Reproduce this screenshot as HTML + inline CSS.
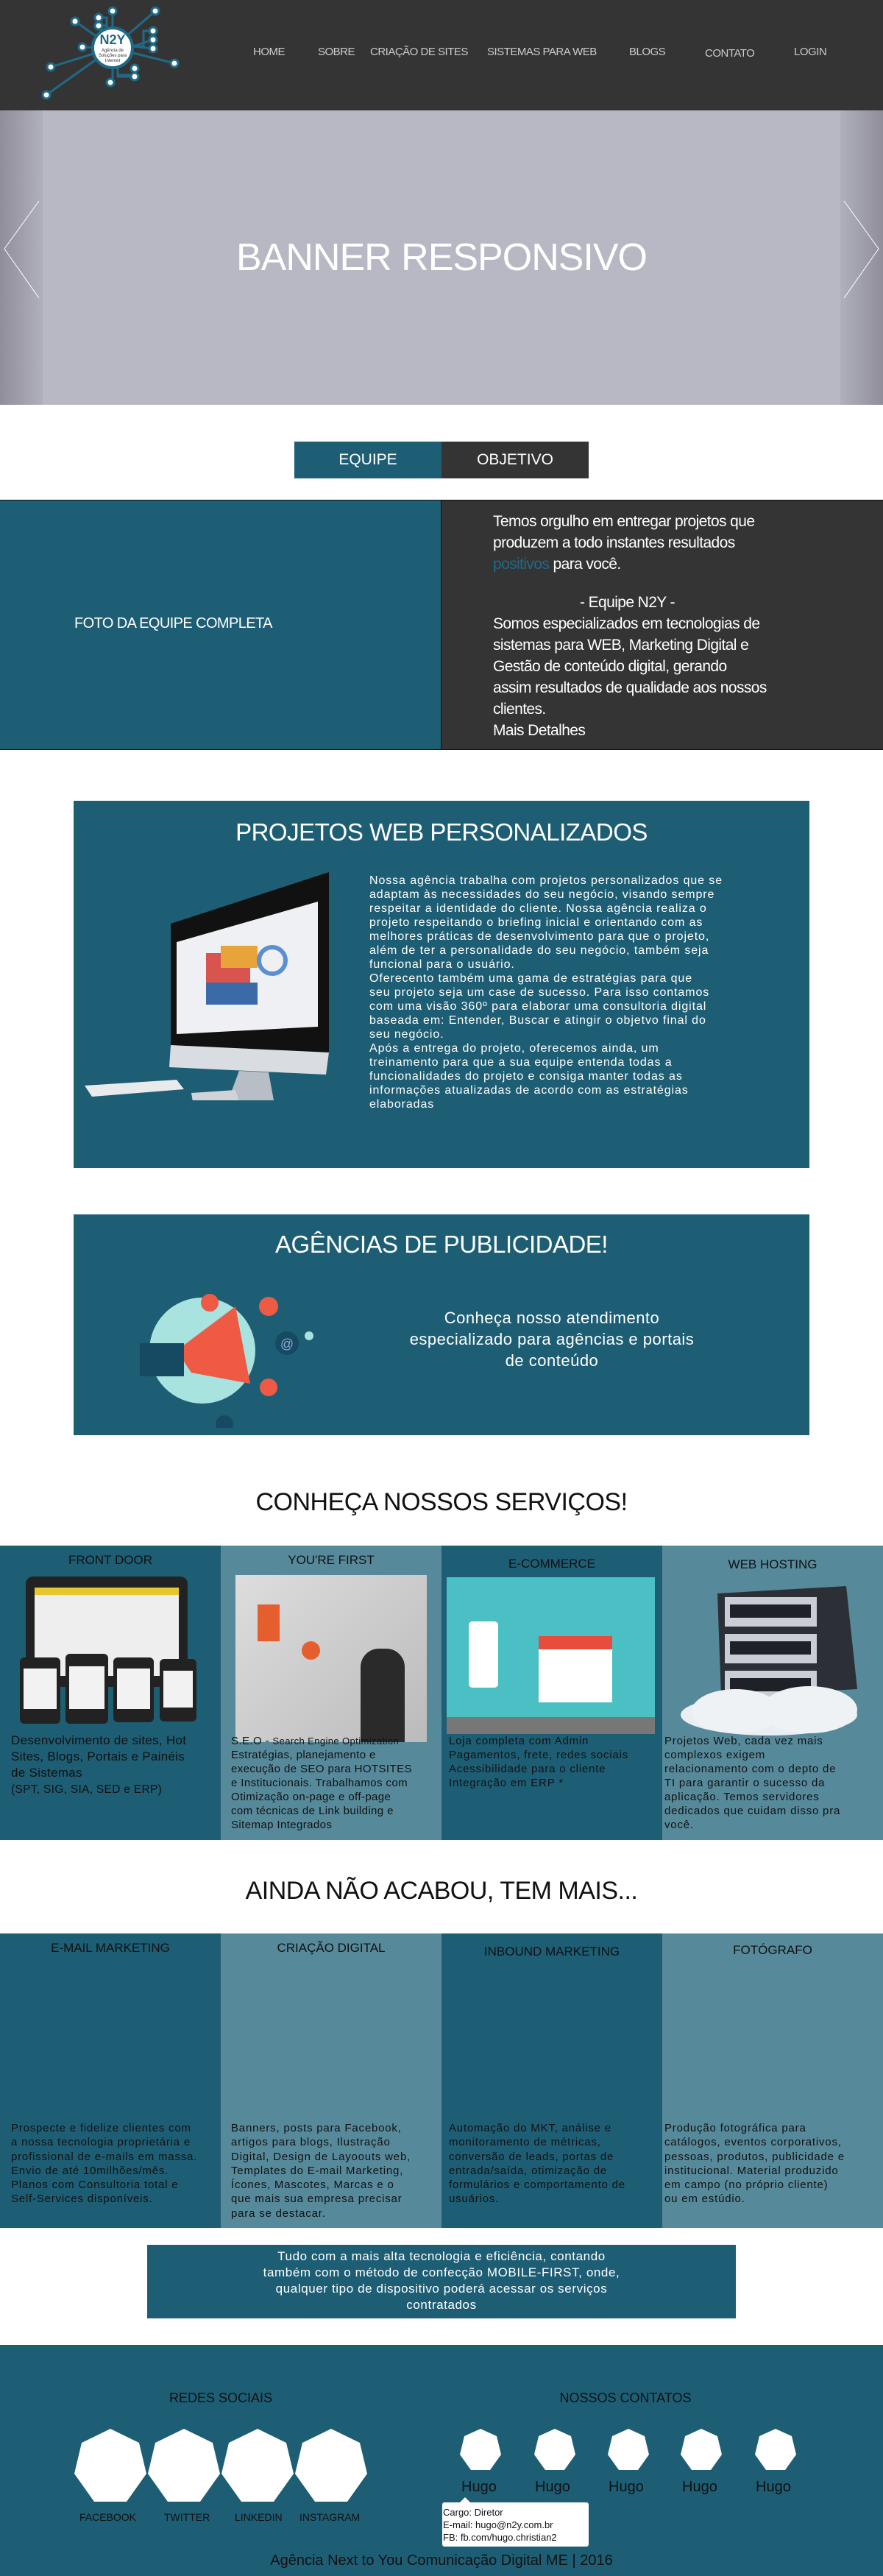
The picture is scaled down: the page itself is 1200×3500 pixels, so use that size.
<!DOCTYPE html>
<html><head><meta charset="utf-8"><style>
*{margin:0;padding:0;box-sizing:border-box}
body{width:1200px;height:3500px;position:relative;background:#fff;font-family:"Liberation Sans",sans-serif;overflow:hidden}
.a{position:absolute}
.nav{color:#ccc;font-size:15px;top:62px;letter-spacing:-0.5px}
.t{color:#fff}
.c{text-align:center}
.col{position:absolute;top:0;height:100%;width:300px}
.dk{background:#1d5e75}.lt{background:#56899a}
.ct{position:absolute;width:300px;text-align:center;font-size:17px;color:#111}
.cx{position:absolute;font-size:15px;line-height:19px;color:#111;white-space:nowrap;letter-spacing:0.8px}
</style></head><body>
<!-- header -->
<div class="a" style="left:0;top:0;width:1200px;height:150px;background:#353435"></div>
<svg class="a" style="left:40px;top:0" width="220" height="150" viewBox="0 0 220 150">
<g stroke="#1f6a86" stroke-width="3" fill="none">
<line x1="113" y1="65" x2="171" y2="15"/><line x1="113" y1="65" x2="62" y2="29"/><line x1="113" y1="65" x2="29" y2="91"/><line x1="113" y1="65" x2="23" y2="129"/><line x1="113" y1="65" x2="197" y2="86"/><line x1="113" y1="65" x2="72" y2="64"/>
<polyline points="113,40 113,15"/><polyline points="105,40 105,24 94,24"/><polyline points="105,40 105,35 94,35"/><polyline points="140,63 155,63 155,42 168,42"/><polyline points="140,63 168,54"/><polyline points="140,63 168,66"/><polyline points="113,90 113,112"/><polyline points="120,92 120,102 143,102 143,93"/><polyline points="120,92 120,104 143,104"/>
</g>
<g fill="#fff" stroke="#1f6a86" stroke-width="3">
<circle cx="171" cy="15" r="5"/><circle cx="62" cy="29" r="5"/><circle cx="29" cy="91" r="5"/><circle cx="23" cy="129" r="5"/><circle cx="197" cy="86" r="5"/><circle cx="72" cy="64" r="5"/><circle cx="113" cy="15" r="5"/><circle cx="94" cy="24" r="5"/><circle cx="94" cy="35" r="5"/><circle cx="168" cy="42" r="5"/><circle cx="168" cy="54" r="5"/><circle cx="168" cy="66" r="5"/><circle cx="110" cy="112" r="5"/><circle cx="143" cy="93" r="5"/><circle cx="143" cy="104" r="5"/>
<circle cx="113" cy="65" r="27" stroke-width="4"/></g>
<text x="113" y="60" text-anchor="middle" font-family="Liberation Sans" font-weight="bold" font-size="18" fill="#1f6a86">N2Y</text>
<text x="113" y="70" text-anchor="middle" font-family="Liberation Sans" font-size="6" fill="#333">Agência de</text>
<text x="113" y="77" text-anchor="middle" font-family="Liberation Sans" font-size="6" fill="#333">Soluções para</text>
<text x="113" y="84" text-anchor="middle" font-family="Liberation Sans" font-size="6" fill="#333">Internet</text>
</svg>
<div class="a nav" style="left:344px">HOME</div>
<div class="a nav" style="left:432px">SOBRE</div>
<div class="a nav" style="left:503px">CRIAÇÃO DE SITES</div>
<div class="a nav" style="left:662px">SISTEMAS PARA WEB</div>
<div class="a nav" style="left:855px">BLOGS</div>
<div class="a nav" style="left:958px;top:64px">CONTATO</div>
<div class="a nav" style="left:1079px">LOGIN</div>
<!-- banner -->
<div class="a" style="left:0;top:150px;width:1200px;height:400px;background:linear-gradient(90deg,#8f8e9a 0,#b0b0bc 58px,#b8b8c5 58px,#b8b8c5 1142px,#b0b0bc 1142px,#8f8e9a 1200px)"></div>
<svg class="a" style="left:0;top:270px" width="1200" height="140"><polyline points="53,3 6,68 53,135" fill="none" stroke="#fff" stroke-width="1"/><polyline points="1147,3 1194,68 1147,135" fill="none" stroke="#fff" stroke-width="1"/></svg>
<div class="a t c" style="left:0;width:1200px;top:320px;font-size:52px;letter-spacing:-1px">BANNER RESPONSIVO</div>
<!-- tabs -->
<div class="a t c" style="left:400px;top:600px;width:200px;height:50px;background:#1d5e75;font-size:21px;line-height:50px">EQUIPE</div>
<div class="a t c" style="left:600px;top:600px;width:200px;height:50px;background:#353435;font-size:21px;line-height:50px">OBJETIVO</div>
<!-- team -->
<div class="a" style="left:0;top:679px;width:600px;height:340px;background:#1d5e75;border-top:1px solid #111;border-bottom:1px solid #111"></div>
<div class="a" style="left:599px;top:679px;width:601px;height:340px;background:#353435;border-top:1px solid #111;border-bottom:1px solid #111;border-left:1px solid #111"></div>
<div class="a t" style="left:101px;top:836px;font-size:20px;letter-spacing:-0.6px">FOTO DA EQUIPE COMPLETA</div>
<div class="a t" style="left:670px;top:694px;font-size:21px;line-height:29px;letter-spacing:-0.6px;white-space:nowrap">Temos orgulho em entregar projetos que<br>produzem a todo instantes resultados<br><span style="color:#1f6a86">positivos</span> para você.<div style="height:23px"></div><div style="padding-left:118px">- Equipe N2Y -</div>Somos especializados em tecnologias de<br>sistemas para WEB, Marketing Digital e<br>Gestão de conteúdo digital, gerando<br>assim resultados de qualidade aos nossos<br>clientes.<br>Mais Detalhes</div>
<!-- projetos -->
<div class="a" style="left:100px;top:1088px;width:1000px;height:499px;background:#1d5e75"></div>
<div class="a t c" style="left:100px;top:1112px;width:1000px;font-size:33px;letter-spacing:-0.5px">PROJETOS WEB PERSONALIZADOS</div>
<svg class="a" style="left:110px;top:1185px" width="340" height="310">
<polygon points="122,70 337,0 337,245 122,235" fill="#111"/>
<polygon points="130,95 322,40 322,210 130,220" fill="#eef0f3"/>
<rect x="170" y="110" width="60" height="40" fill="#d9534f"/><rect x="190" y="100" width="50" height="30" fill="#e8a33b"/><rect x="170" y="150" width="70" height="30" fill="#3b6aa8"/><circle cx="260" cy="120" r="18" fill="none" stroke="#5b8fd0" stroke-width="6"/>
<polygon points="122,235 337,245 333,275 120,265" fill="#d9dde2"/>
<polygon points="215,270 255,272 262,310 200,310" fill="#b8bec6"/>
<polygon points="5,290 130,282 140,295 15,305" fill="#e8eaec"/>
<polygon points="150,300 210,296 215,312 152,312" fill="#d0d4d8"/>
</svg>
<div class="a t" style="left:502px;top:1187px;font-size:16px;line-height:19px;white-space:nowrap;letter-spacing:0.9px">Nossa agência trabalha com projetos personalizados que se<br>adaptam às necessidades do seu negócio, visando sempre<br>respeitar a identidade do cliente. Nossa agência realiza o<br>projeto respeitando o briefing inicial e orientando com as<br>melhores práticas de desenvolvimento para que o projeto,<br>além de ter a personalidade do seu negócio, também seja<br>funcional para o usuário.<br>Oferecento também uma gama de estratégias para que<br>seu projeto seja um case de sucesso. Para isso contamos<br>com uma visão 360º para elaborar uma consultoria digital<br>baseada em: Entender, Buscar e atingir o objetvo final do<br>seu negócio.<br>Após a entrega do projeto, oferecemos ainda, um<br>treinamento para que a sua equipe entenda todas a<br>funcionalidades do projeto e consiga manter todas as<br>informações atualizadas de acordo com as estratégias<br>elaboradas</div>
<!-- agencias -->
<div class="a" style="left:100px;top:1650px;width:1000px;height:300px;background:#1d5e75"></div>
<div class="a t c" style="left:100px;top:1672px;width:1000px;font-size:33px;letter-spacing:-0.5px">AGÊNCIAS DE PUBLICIDADE!</div>
<svg class="a" style="left:180px;top:1735px" width="260" height="205">
<circle cx="95" cy="100" r="72" fill="#a8e3e0"/>
<polygon points="60,100 140,40 160,145 80,130" fill="#ef5a45"/>
<rect x="10" y="90" width="60" height="45" fill="#164a62"/>
<circle cx="210" cy="90" r="16" fill="#164a62"/><text x="210" y="97" text-anchor="middle" fill="#8ad" font-size="18">@</text>
<circle cx="185" cy="40" r="13" fill="#ef5a45"/><circle cx="105" cy="35" r="12" fill="#ef5a45"/><circle cx="185" cy="150" r="12" fill="#ef5a45"/><circle cx="125" cy="200" r="12" fill="#164a62"/><circle cx="240" cy="80" r="6" fill="#a8e3e0"/>
</svg>
<div class="a t c" style="left:480px;top:1776px;width:540px;font-size:22px;line-height:29px;white-space:nowrap;letter-spacing:0.5px">Conheça nosso atendimento<br>especializado para agências e portais<br>de conteúdo</div>
<!-- servicos -->
<div class="a c" style="left:0;top:2022px;width:1200px;font-size:34px;color:#111;letter-spacing:-0.5px">CONHEÇA NOSSOS SERVIÇOS!</div>
<div class="a" style="left:0;top:2100px;width:1200px;height:400px">
<div class="col dk" style="left:0"></div><div class="col lt" style="left:300px"></div><div class="col dk" style="left:600px"></div><div class="col lt" style="left:900px"></div>
<div class="ct" style="left:0;top:10px">FRONT DOOR</div><div class="ct" style="left:300px;top:10px">YOU'RE FIRST</div><div class="ct" style="left:600px;top:15px">E-COMMERCE</div><div class="ct" style="left:900px;top:16px">WEB HOSTING</div>
<svg class="a" style="left:27px;top:42px" width="245" height="200"><rect x="8" y="0" width="220" height="150" rx="10" fill="#222"/><rect x="20" y="15" width="196" height="120" fill="#eee"/><rect x="20" y="15" width="196" height="10" fill="#e6c730"/><g fill="#222"><rect x="0" y="110" width="55" height="90" rx="6"/><rect x="62" y="105" width="58" height="95" rx="6"/><rect x="127" y="110" width="55" height="88" rx="6"/><rect x="190" y="112" width="50" height="85" rx="6"/></g><g fill="#f2f2f2"><rect x="5" y="125" width="45" height="55"/><rect x="67" y="122" width="48" height="58"/><rect x="132" y="125" width="45" height="55"/><rect x="195" y="128" width="40" height="50"/></g></svg>
<div class="a" style="left:320px;top:40px;width:260px;height:227px;background:linear-gradient(135deg,#ddd,#bbb)"><div class="a" style="left:170px;top:100px;width:60px;height:127px;background:#2a2a2a;border-radius:25px 25px 0 0"></div><div class="a" style="left:30px;top:40px;width:30px;height:50px;background:#e55e2e"></div><div class="a" style="left:90px;top:90px;width:25px;height:25px;border-radius:50%;background:#e55e2e"></div></div>
<div class="a" style="left:607px;top:43px;width:283px;height:213px;background:#4bc0c4"><div class="a" style="left:125px;top:90px;width:100px;height:80px;background:#fff"></div><div class="a" style="left:125px;top:80px;width:100px;height:18px;background:#e84c3d"></div><div class="a" style="left:30px;top:60px;width:40px;height:90px;background:#fff;border-radius:5px"></div><div class="a" style="left:0;top:190px;width:283px;height:23px;background:#777"></div></div>
<svg class="a" style="left:920px;top:45px" width="250" height="215"><ellipse cx="125" cy="185" rx="120" ry="28" fill="#e8eef2"/><polygon points="55,20 230,10 245,150 60,160" fill="#2c3036"/><g fill="#c9ced4"><rect x="65" y="25" width="125" height="40"/><rect x="65" y="75" width="125" height="40"/><rect x="65" y="125" width="125" height="35"/></g><g fill="#1e2228"><rect x="72" y="35" width="110" height="18"/><rect x="72" y="85" width="110" height="18"/><rect x="72" y="135" width="110" height="18"/></g><ellipse cx="80" cy="180" rx="60" ry="30" fill="#eef2f5"/><ellipse cx="180" cy="178" rx="65" ry="32" fill="#eef2f5"/></svg>
<div class="cx" style="left:15px;top:254px;font-size:17px;line-height:22px;letter-spacing:0.3px">Desenvolvimento de sites, Hot<br>Sites, Blogs, Portais e Painéis<br>de Sistemas<br><span style="font-size:15.5px">(SPT, SIG, SIA, SED e ERP)</span></div>
<div class="cx" style="left:314px;top:256px;letter-spacing:0.4px">S.E.O - <span style="font-size:13px">Search Engine Optimization</span><br>Estratégias, planejamento e<br>execução de SEO para HOTSITES<br>e Institucionais. Trabalhamos com<br>Otimização on-page e off-page<br>com técnicas de Link building e<br>Sitemap Integrados</div>
<div class="cx" style="left:610px;top:256px">Loja completa com Admin<br>Pagamentos, frete, redes sociais<br>Acessibilidade para o cliente<br>Integração em ERP *</div>
<div class="cx" style="left:903px;top:256px">Projetos Web, cada vez mais<br>complexos exigem<br>relacionamento com o depto de<br>TI para garantir o sucesso da<br>aplicação. Temos servidores<br>dedicados que cuidam disso pra<br>você.</div>
</div>
<!-- ainda -->
<div class="a c" style="left:0;top:2550px;width:1200px;font-size:34px;color:#111;letter-spacing:-0.5px">AINDA NÃO ACABOU, TEM MAIS...</div>
<div class="a" style="left:0;top:2627px;width:1200px;height:400px">
<div class="col dk" style="left:0"></div><div class="col lt" style="left:300px"></div><div class="col dk" style="left:600px"></div><div class="col lt" style="left:900px"></div>
<div class="ct" style="left:0;top:10px">E-MAIL MARKETING</div><div class="ct" style="left:300px;top:10px">CRIAÇÃO DIGITAL</div><div class="ct" style="left:600px;top:15px">INBOUND MARKETING</div><div class="ct" style="left:900px;top:13px">FOTÓGRAFO</div>
<div class="cx" style="left:15px;top:255px;line-height:19.3px">Prospecte e fidelize clientes com<br>a nossa tecnologia proprietária e<br>profissional de e-mails em massa.<br>Envio de até 10milhões/mês.<br>Planos com Consultoria total e<br>Self-Services disponíveis.</div>
<div class="cx" style="left:314px;top:255px;line-height:19.3px">Banners, posts para Facebook,<br>artigos para blogs, Ilustração<br>Digital, Design de Layoouts web,<br>Templates do E-mail Marketing,<br>Ícones, Mascotes, Marcas e o<br>que mais sua empresa precisar<br>para se destacar.</div>
<div class="cx" style="left:610px;top:255px;line-height:19.3px">Automação do MKT, análise e<br>monitoramento de métricas,<br>conversão de leads, portas de<br>entrada/saída, otimização de<br>formulários e comportamento de<br>usuários.</div>
<div class="cx" style="left:903px;top:255px;line-height:19.3px">Produção fotográfica para<br>catálogos, eventos corporativos,<br>pessoas, produtos, publicidade e<br>institucional. Material produzido<br>em campo (no próprio cliente)<br>ou em estúdio.</div>
</div>
<div class="a t c" style="left:200px;top:3050px;width:800px;height:100px;background:#1d5e75;font-size:17px;line-height:22px;padding-top:5px;white-space:nowrap;letter-spacing:0.6px">Tudo com a mais alta tecnologia e eficiência, contando<br>também com o método de confecção MOBILE-FIRST, onde,<br>qualquer tipo de dispositivo poderá acessar os serviços<br>contratados</div>
<!-- footer -->
<div class="a" style="left:0;top:3186px;width:1200px;height:314px;background:#1d5e75"></div>
<div class="a c" style="left:150px;top:3248px;width:300px;font-size:18px;color:#111">REDES SOCIAIS</div>
<div class="a c" style="left:700px;top:3248px;width:300px;font-size:18px;color:#111">NOSSOS CONTATOS</div>
<svg class="a" style="left:0;top:3295px" width="1200" height="110">
<g fill="#fff">
<polygon points="150,5 189,24 199,66 172,104 128,104 101,66 111,24"/>
<polygon points="250,5 289,24 299,66 272,104 228,104 201,66 211,24"/>
<polygon points="350,5 389,24 399,66 372,104 328,104 301,66 311,24"/>
<polygon points="450,5 489,24 499,66 472,104 428,104 401,66 411,24"/>
<polygon points="653,5 675,15 681,40 666,61 640,61 625,40 631,15"/>
<polygon points="754,5 776,15 782,40 767,61 741,61 726,40 732,15"/>
<polygon points="854,5 876,15 882,40 867,61 841,61 826,40 832,15"/>
<polygon points="953,5 975,15 981,40 966,61 940,61 925,40 931,15"/>
<polygon points="1054,5 1076,15 1082,40 1067,61 1041,61 1026,40 1032,15"/>
</g></svg>
<div class="a" style="left:0;top:3412px;font-size:14px;color:#111;width:1200px">
<span class="a" style="left:108px">FACEBOOK</span><span class="a" style="left:223px">TWITTER</span><span class="a" style="left:319px">LINKEDIN</span><span class="a" style="left:407px">INSTAGRAM</span></div>
<div class="a" style="left:0;top:3368px;font-size:20px;color:#111;width:1200px">
<span class="a" style="left:627px">Hugo</span><span class="a" style="left:727px">Hugo</span><span class="a" style="left:827px">Hugo</span><span class="a" style="left:927px">Hugo</span><span class="a" style="left:1027px">Hugo</span></div>
<div class="a" style="left:601px;top:3400px;width:199px;height:60px;background:#fff;font-size:13px;line-height:17px;color:#111;padding:5px 1px;border-radius:3px">Cargo: Diretor<br>E-mail: hugo@n2y.com.br<br>FB: fb.com/hugo.christian2</div>
<div class="a" style="left:624px;top:3393px;width:0;height:0;border-left:8px solid transparent;border-right:8px solid transparent;border-bottom:8px solid #fff"></div>
<div class="a c" style="left:0;top:3468px;width:1200px;font-size:20px;color:#111">Agência Next to You Comunicação Digital ME | 2016</div>
</body></html>
